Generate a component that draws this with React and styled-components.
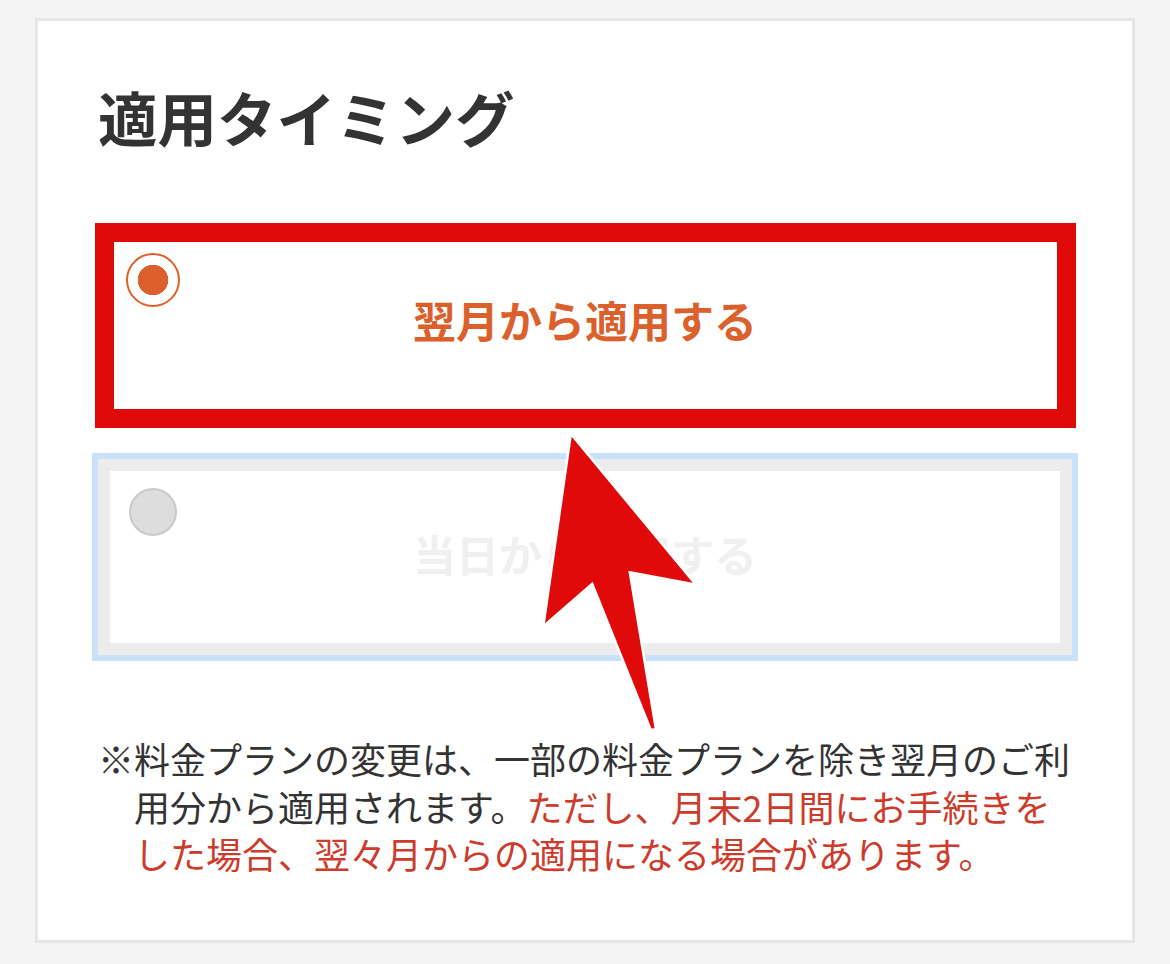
import styled, { createGlobalStyle } from "styled-components";

const GlobalStyle = createGlobalStyle`
  body {
    margin: 0;
    background: #f4f4f4;
    font-family: "Noto Sans CJK JP", "Noto Sans", sans-serif;
  }
`;

const Page = styled.div`
  padding: 18px 0 20px 35px;
`;

const Card = styled.section`
  position: relative;
  width: 1100px;
  box-sizing: border-box;
  background: #fff;
  border: 3px solid #e6e6e6;
  padding: 66px 35px 62px 60px;
`;

const Title = styled.h2`
  margin: 0;
  font-size: 59.5px;
  line-height: 1;
  font-weight: 700;
  color: #333;
`;

const Options = styled.div`
  display: flex;
  flex-direction: column;
  gap: 36px;
  margin-top: 80.5px;
  width: 974px;
`;

const Option = styled.label`
  position: relative;
  display: grid;
  grid-template-columns: 54px 1fr 54px;
  align-items: center;
  height: 196px;
  box-sizing: border-box;
  padding: 14px 16px;
  background: #fff;
  border: 12px solid ${(p) => (p.checked ? "#dc602c" : "#ececec")};
  box-shadow: ${(p) => (p.focused ? "0 0 0 6px #c8e3f9" : "none")};
`;

const Radio = styled.span`
  align-self: start;
  justify-self: center;
  box-sizing: border-box;
  border-radius: 50%;
  ${(p) =>
    p.checked
      ? `
  width: 54px;
  height: 54px;
  border: 2px solid #dc602c;
  background: radial-gradient(circle, #dc602c 0 15px, #fff 15.5px);
`
      : `
  width: 48px;
  height: 48px;
  margin-top: 3px;
  border: 2px solid #c9c9c9;
  background: #dddddd;
`}
`;

const Label = styled.span`
  padding-bottom: ${(p) => (p.checked ? "11px" : "8px")};
  text-align: center;
  font-size: 43px;
  font-weight: 700;
  line-height: 1;
  color: ${(p) => (p.checked ? "#dc602c" : "#f0f0f0")};
`;

const Highlight = styled.span`
  position: absolute;
  inset: -16px -16px -17px -15px;
  border: 19px solid #e00a0a;
  pointer-events: none;
`;

const Arrow = styled.svg`
  position: absolute;
  left: 492px;
  top: 404px;
  overflow: visible;
  pointer-events: none;
`;

const Note = styled.p`
  width: 982px;
  margin: 80px 0 0;
  padding-left: 36px;
  text-indent: -36px;
  box-sizing: border-box;
  font-size: 36px;
  line-height: 47.5px;
  color: #333;
`;

const Caution = styled.span`
  color: #cc3b2b;
`;

export default function App() {
  return (
    <Page>
      <GlobalStyle />
      <Card>
        <Title>適用タイミング</Title>
        <Options>
          <Option checked>
            <Radio checked />
            <Label checked>翌月から適用する</Label>
            <Highlight />
          </Option>
          <Option focused>
            <Radio />
            <Label>当日から適用する</Label>
          </Option>
        </Options>
        <Note>
          ※料金プランの変更は、一部の料金プランを除き翌月のご利用分から適用されます。
          <Caution>
            ただし、月末2日間にお手続きをした場合、翌々月からの適用になる場合があります。
          </Caution>
        </Note>
        <Arrow width="180" height="320" viewBox="0 0 180 320">
          <polygon
            points="41.7,11.7 162.7,157.7 98.3,145.7 124.5,303.3 121.5,303.5 62.7,156.7 15,198.3"
            fill="#e00a0a"
            stroke="#fff"
            strokeWidth="5"
            strokeLinejoin="miter"
            paintOrder="stroke"
          />
        </Arrow>
      </Card>
    </Page>
  );
}
